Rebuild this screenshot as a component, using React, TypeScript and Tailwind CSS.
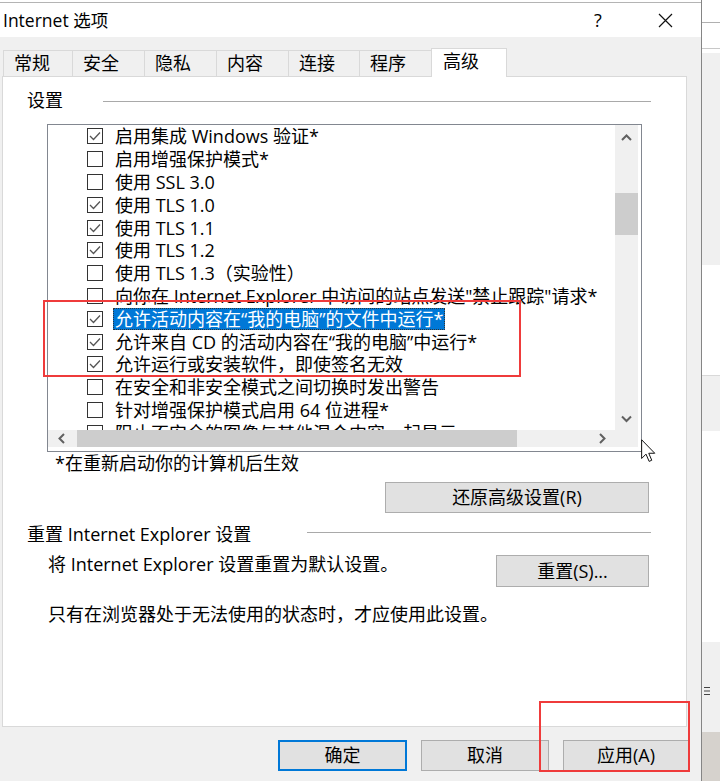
import React from "react";

type Row = { label: string; on: boolean; selected?: boolean };

const ROWS: Row[] = [
  { label: "启用集成 Windows 验证*", on: true },
  { label: "启用增强保护模式*", on: false },
  { label: "使用 SSL 3.0", on: false },
  { label: "使用 TLS 1.0", on: true },
  { label: "使用 TLS 1.1", on: true },
  { label: "使用 TLS 1.2", on: true },
  { label: "使用 TLS 1.3（实验性）", on: false },
  { label: '向你在 Internet Explorer 中访问的站点发送"禁止跟踪"请求*', on: false },
  { label: "允许活动内容在“我的电脑”的文件中运行*", on: true, selected: true },
  { label: "允许来自 CD 的活动内容在“我的电脑”中运行*", on: true },
  { label: "允许运行或安装软件，即使签名无效", on: true },
  { label: "在安全和非安全模式之间切换时发出警告", on: false },
  { label: "针对增强保护模式启用 64 位进程*", on: false },
  { label: "阻止不安全的图像与其他混合内容一起显示", on: false },
];

const TABS = [
  { name: "常规", w: "w-[70px]" },
  { name: "安全", w: "w-[72px]" },
  { name: "隐私", w: "w-[72px]" },
  { name: "内容", w: "w-[72px]" },
  { name: "连接", w: "w-[71px]" },
  { name: "程序", w: "w-[72px]" },
];

function CheckBox({ on }: { on: boolean }) {
  return (
    <span className="flex h-[16px] w-[16px] shrink-0 items-center justify-center border border-[#333] bg-white">
      {on && (
        <svg width="12" height="10" viewBox="0 0 12 10">
          <path d="M1 5 L4.5 8.5 L11 1.5" fill="none" stroke="#555" strokeWidth="1.3" />
        </svg>
      )}
    </span>
  );
}

function Chevron({ dir }: { dir: "up" | "down" | "left" | "right" }) {
  if (dir === "up" || dir === "down") {
    const d = dir === "up" ? "M1 6 L5.5 1.5 L10 6" : "M1 1.5 L5.5 6 L10 1.5";
    return (
      <svg width="11" height="8" viewBox="0 0 11 8">
        <path d={d} fill="none" stroke="#606060" strokeWidth="2" />
      </svg>
    );
  }
  const d = dir === "left" ? "M6 1 L1.5 5.5 L6 10" : "M1 1 L5.5 5.5 L1 10";
  return (
    <svg width="8" height="11" viewBox="0 0 8 11">
      <path d={d} fill="none" stroke="#606060" strokeWidth="2" />
    </svg>
  );
}

function Button({ label, className }: { label: string; className: string }) {
  return (
    <div className={`flex items-center justify-center border border-[#adadad] bg-[#e1e1e1] ${className}`}>
      {label}
    </div>
  );
}

export default function App() {
  return (
    <div className="relative flex h-[781px] w-[720px] overflow-hidden bg-white font-['Open_Sans','Noto_Sans_CJK_SC',sans-serif] text-[18px] text-black">
      {/* dialog */}
      <div className="flex h-full w-[702px] shrink-0 flex-col border-r border-[#858585] pt-[2px]">
        <div className="flex h-[35px] items-center border-t border-[#b4b4b4] bg-white">
          <span className="pl-[3px] text-[17.5px]">Internet 选项</span>
          <span className="ml-auto w-[46px] text-center">?</span>
          <span className="ml-[21px] mr-[13px] flex w-[46px] justify-center">
            <svg width="15" height="15" viewBox="0 0 15 15">
              <path d="M1 1 L14 14 M14 1 L1 14" stroke="#111" strokeWidth="1.2" />
            </svg>
          </span>
        </div>

        <div className="flex flex-1 flex-col bg-[#f0f0f0]">
          {/* tabs */}
          <div className="mt-[11px] flex h-[28px] items-start pl-[3px]">
            {TABS.map((t) => (
              <div
                key={t.name}
                className={`mt-[2px] flex h-[26px] items-center border-t border-r border-[#d9d9d9] pl-[10px] first:border-l ${t.w}`}
              >
                {t.name}
              </div>
            ))}
            <div className="relative z-10 -ml-px flex h-[29px] w-[76px] items-center border-x border-t border-[#d9d9d9] bg-white pb-[4px] pl-[11px]">
              高级
            </div>
          </div>

          {/* panel */}
          <div className="ml-[2px] flex h-[651px] w-[685px] flex-col border border-[#d9d9d9] bg-white">
            <div className="mt-[11px] flex h-[24px] items-center pl-[24px] pr-[35px]">
              <span className="w-[76px]">设置</span>
              <div className="mt-[3px] h-px flex-1 bg-[#a9a9a9]" />
            </div>

            {/* list box */}
            <div className="ml-[44px] mt-[12px] flex h-[328px] w-[595px] flex-col border border-[#828790]">
              <div className="flex h-[322px] pr-[3px]">
                <div className="flex w-[567px] flex-col">
                  <div className="h-[305px] overflow-hidden">
                    {ROWS.map((r) => (
                      <div key={r.label} className="flex h-[22.8px] items-center whitespace-nowrap pl-[39px]">
                        <CheckBox on={r.on} />
                        {r.selected ? (
                          <span className="ml-[10px] border border-dotted border-[#333] bg-[#0078d7] px-[1px] leading-[20px] text-white">
                            {r.label}
                          </span>
                        ) : (
                          <span className="ml-[12px] leading-[22px]">{r.label}</span>
                        )}
                      </div>
                    ))}
                  </div>
                  <div className="flex h-[17px] items-stretch bg-[#f0f0f0]">
                    <div className="flex w-[27px] items-center justify-center">
                      <Chevron dir="left" />
                    </div>
                    <div className="ml-[2px] w-[440px] bg-[#cdcdcd]" />
                    <div className="ml-auto flex w-[25px] items-center justify-center">
                      <Chevron dir="right" />
                    </div>
                  </div>
                </div>
                <div className="flex w-[23px] flex-col bg-[#f0f0f0]">
                  <div className="flex h-[25px] items-center justify-center">
                    <Chevron dir="up" />
                  </div>
                  <div className="mt-[43px] h-[42px] bg-[#cdcdcd]" />
                  <div className="mt-auto flex h-[22px] items-center justify-center">
                    <Chevron dir="down" />
                  </div>
                  <div className="h-[17px]" />
                </div>
              </div>
            </div>

            <div className="ml-[52px] h-[22px] leading-[22px]">*在重新启动你的计算机后生效</div>

            <Button label="还原高级设置(R)" className="ml-[382px] mt-[8px] h-[31px] w-[264px]" />

            <div className="mt-[9px] flex h-[24px] items-center pl-[24px] pr-[35px]">
              <span className="w-[280px] whitespace-nowrap">重置 Internet Explorer 设置</span>
              <div className="-mt-[3px] h-px flex-1 bg-[#a9a9a9]" />
            </div>

            <div className="mt-[7px] flex items-start pl-[45px] pr-[37px]">
              <span className="h-[22px] leading-[22px]">将 Internet Explorer 设置重置为默认设置。</span>
              <Button label="重置(S)..." className="ml-auto mt-[2px] h-[32px] w-[153px]" />
            </div>

            <div className="mt-[16px] h-[22px] pl-[45px] leading-[22px]">
              只有在浏览器处于无法使用的状态时，才应使用此设置。
            </div>
          </div>

          {/* footer buttons */}
          <div className="flex flex-1 gap-[14px] pl-[278px] pt-[13px]">
            <div className="flex h-[31px] w-[129px] items-center justify-center border-2 border-[#0078d7] bg-[#e1e1e1]">
              确定
            </div>
            <Button label="取消" className="h-[31px] w-[128px]" />
            <Button label="应用(A)" className="h-[31px] w-[126px]" />
          </div>
        </div>
      </div>

      {/* window behind */}
      <div className="flex flex-1 flex-col">
        <div className="h-[23px] border-b border-[#b0b0b0]" />
        <div className="h-[26px] border-b border-[#c8c8c8]" />
        <div className="h-[4px]" />
        <div className="h-[212px] bg-[#f0f0f0]" />
        <div className="h-[111px] border-b border-[#d9d9d9]" />
        <div className="h-[55px] bg-[#f0f0f0]" />
        <div className="h-[211px]" />
        <div className="flex h-[90px] flex-col bg-[#f0f0f0] pl-[2px] pt-[44px]">
          <svg width="6" height="10" viewBox="0 0 6 10">
            <path d="M0 1.5 H6 M0 5 H6 M0 8.5 H6" stroke="#444" strokeWidth="1" />
          </svg>
        </div>
        <div className="flex-1 bg-[#d6d2cd]" />
      </div>

      {/* annotations */}
      <div className="absolute left-[43px] top-[300px] z-20 h-[77px] w-[478px] border-2 border-solid border-[#ef3b3b]" />
      <div className="absolute left-[539px] top-[701px] z-20 h-[71px] w-[151px] border-2 border-solid border-[#ef3b3b]" />

      {/* mouse pointer */}
      <svg className="absolute left-[641px] top-[439px] z-20" width="15" height="24" viewBox="0 0 12 19">
        <path
          d="M0.5 0.5 L0.5 15.5 L4 12 L6.5 17.8 L8.6 16.9 L6.2 11.3 L11 11.3 Z"
          fill="#fff"
          stroke="#111"
          strokeWidth="0.8"
          strokeLinejoin="round"
        />
      </svg>
    </div>
  );
}
